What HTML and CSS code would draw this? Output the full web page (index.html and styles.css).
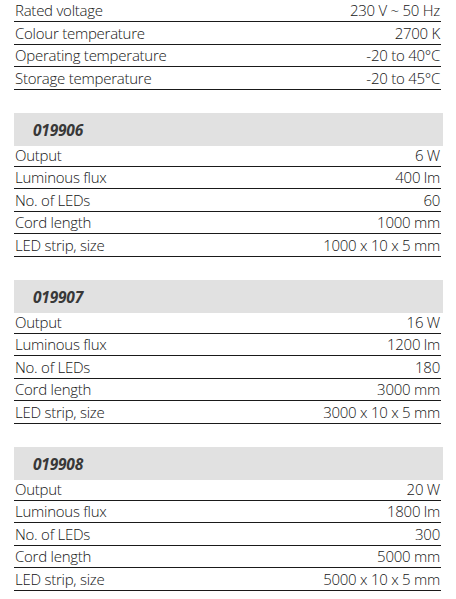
FILE: index.html
```html
<!DOCTYPE html>
<html lang="en">
<head>
<meta charset="utf-8">
<link rel="stylesheet" href="styles.css">
</head>
<body>
<div class="sheet">
  <section class="block block-general">
    <div class="row"><span class="label">Rated voltage</span><span class="value">230 V ~ 50 Hz</span></div>
    <div class="row"><span class="label">Colour temperature</span><span class="value">2700 K</span></div>
    <div class="row"><span class="label">Operating temperature</span><span class="value">-20 to 40°C</span></div>
    <div class="row"><span class="label">Storage temperature</span><span class="value">-20 to 45°C</span></div>
  </section>

  <section class="block">
    <h2 class="head">019906</h2>
    <div class="row"><span class="label">Output</span><span class="value">6 W</span></div>
    <div class="row"><span class="label">Luminous flux</span><span class="value">400 lm</span></div>
    <div class="row"><span class="label">No. of LEDs</span><span class="value">60</span></div>
    <div class="row"><span class="label">Cord length</span><span class="value">1000 mm</span></div>
    <div class="row"><span class="label">LED strip, size</span><span class="value">1000 x 10 x 5 mm</span></div>
  </section>

  <section class="block">
    <h2 class="head">019907</h2>
    <div class="row"><span class="label">Output</span><span class="value">16 W</span></div>
    <div class="row"><span class="label">Luminous flux</span><span class="value">1200 lm</span></div>
    <div class="row"><span class="label">No. of LEDs</span><span class="value">180</span></div>
    <div class="row"><span class="label">Cord length</span><span class="value">3000 mm</span></div>
    <div class="row"><span class="label">LED strip, size</span><span class="value">3000 x 10 x 5 mm</span></div>
  </section>

  <section class="block">
    <h2 class="head">019908</h2>
    <div class="row"><span class="label">Output</span><span class="value">20 W</span></div>
    <div class="row"><span class="label">Luminous flux</span><span class="value">1800 lm</span></div>
    <div class="row"><span class="label">No. of LEDs</span><span class="value">300</span></div>
    <div class="row"><span class="label">Cord length</span><span class="value">5000 mm</span></div>
    <div class="row"><span class="label">LED strip, size</span><span class="value">5000 x 10 x 5 mm</span></div>
  </section>
</div>
</body>
</html>
```
FILE: styles.css
```css
html, body {
  margin: 0;
  padding: 0;
  background: #ffffff;
}

body {
  font-family: "Open Sans", "Liberation Sans", sans-serif;
  font-weight: 300;
  font-size: 15px;
  letter-spacing: -0.25px;
  color: #151515;
}

.sheet {
  display: flex;
  flex-direction: column;
  gap: 23.5px;
  width: 427px;
  margin-left: 14px;
  margin-top: -0.5px;
}

.block {
  display: flex;
  flex-direction: column;
}

.head {
  margin: 0 -2px 0 0;
  height: 33px;
  box-sizing: border-box;
  background: #e1e1e1;
  padding-left: 19px;
  display: flex;
  align-items: center;
  font-size: 15.5px;
  font-weight: 700;
  font-style: italic;
  letter-spacing: -0.2px;
  color: #383838;
}

.row {
  height: 22.5px;
  box-sizing: border-box;
  border-bottom: 1px solid #1a1a1a;
  display: flex;
  justify-content: space-between;
  align-items: flex-end;
  padding: 0 1px 1px 1px;
  line-height: 20px;
  white-space: nowrap;
}

.head + .row {
  height: 20.5px;
}

.value {
  text-align: right;
}
```
